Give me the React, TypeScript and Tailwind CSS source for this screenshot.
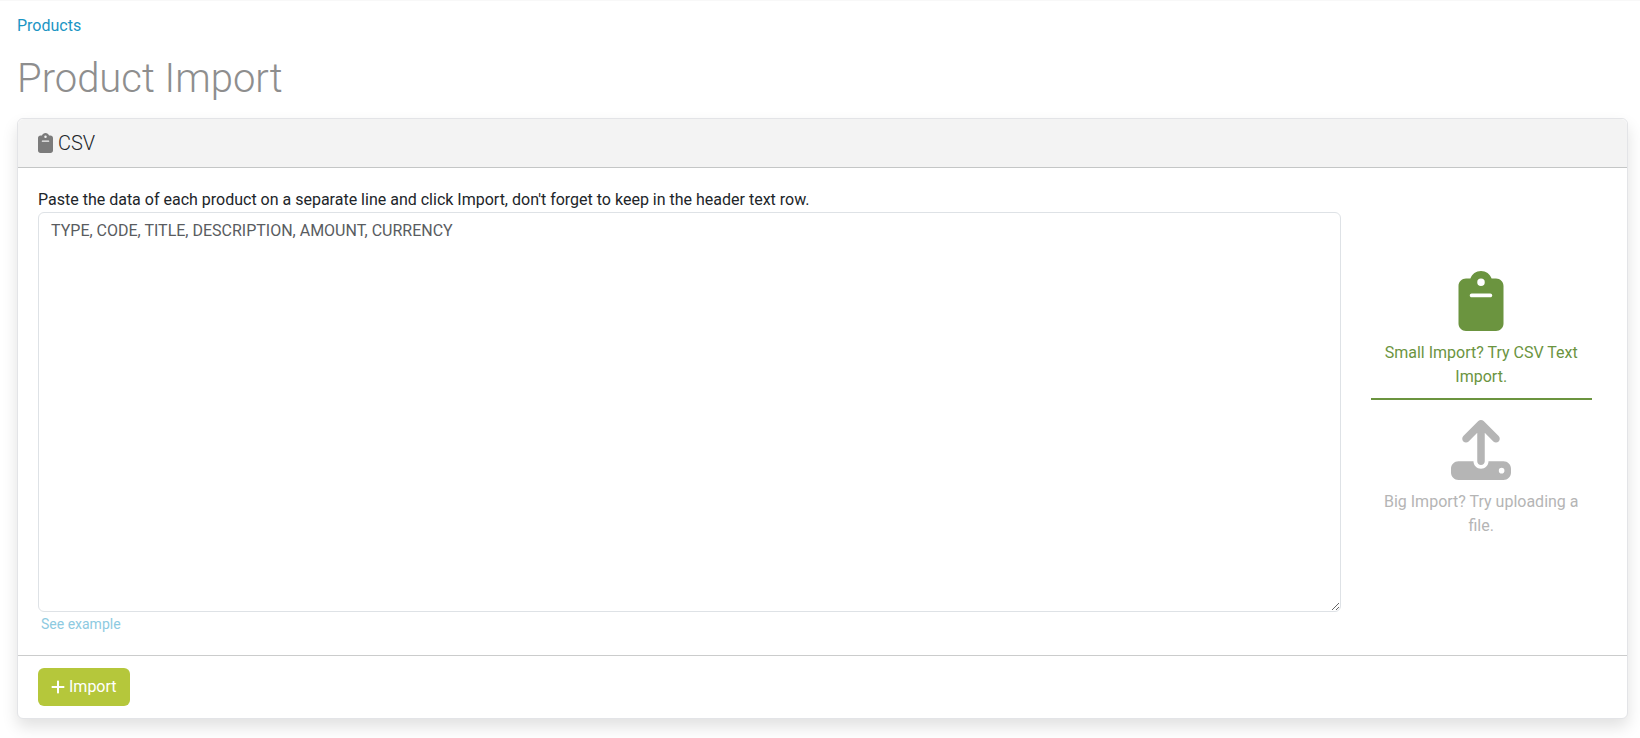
import { useState } from "react";
import { FaClipboard, FaPlus, FaUpload } from "react-icons/fa6";

const CSV_HEADER = "TYPE, CODE, TITLE, DESCRIPTION, AMOUNT, CURRENCY";

export default function App() {
  const [mode, setMode] = useState("text");
  const [csv, setCsv] = useState(CSV_HEADER);

  const tabs = [
    { id: "text", Icon: FaClipboard, label: "Small Import? Try CSV Text Import." },
    { id: "file", Icon: FaUpload, label: "Big Import? Try uploading a file." },
  ];

  return (
    <div className="border-t border-[#f8f8f8] pl-[17px] pr-3 pt-[13px] pb-5 font-[Roboto,sans-serif] text-base text-[#212529]">
      {/* Breadcrumb */}
      <nav>
        <a href="#products" className="text-[#1b95c4]">
          Products
        </a>
      </nav>
      <h1 className="mt-[17px] text-[40px] leading-[48px] font-light text-[#8e8e8e]">
        Product Import
      </h1>

      <div className="mt-[15px] rounded-md border border-[#e3e4e7] bg-white shadow-[0_8px_16px_rgba(0,0,0,0.12)]">
        {/* Header */}
        <div className="flex items-center gap-[5px] rounded-t-md border-b border-[#c4c6c6] bg-[#f3f3f3] px-5 py-3">
          <FaClipboard className="h-5 w-[15px] text-[#7b7b7b]" />
          <h2 className="text-xl leading-6 font-light">CSV</h2>
        </div>

        {/* Body */}
        <div className="p-5">
          <div className="-mx-3 flex items-center">
            <div className="w-5/6 pr-[13px] pl-3">
              <label htmlFor="csv" className="block">
                Paste the data of each product on a separate line and click
                Import, don't forget to keep in the header text row.
              </label>
              <textarea
                id="csv"
                spellCheck={false}
                value={csv}
                onChange={(e) => setCsv(e.target.value)}
                className="block h-[400px] w-full resize rounded-md border border-[#dee2e6] px-3 py-1.5 text-[#595c5f]"
              />
              <a
                href="#example"
                className="ml-[3px] block w-fit pt-0.5 text-sm leading-[21px] text-[#8dcae1]"
              >
                See example
              </a>
            </div>

            {/* Import mode */}
            <div className="w-1/6 pr-[27px] pb-6 pl-[17px]">
              {tabs.map(({ id, Icon, label }) => (
                <button
                  key={id}
                  type="button"
                  onClick={() => setMode(id)}
                  className={`flex w-full flex-col items-center gap-2.5 border-b-2 px-2 pt-5 pb-[9px] ${
                    mode === id
                      ? "border-[#6b943f] text-[#6b943f]"
                      : "border-transparent text-[#b5b5b5]"
                  }`}
                >
                  <Icon className="size-[60px]" />
                  <span>{label}</span>
                </button>
              ))}
            </div>
          </div>
        </div>

        {/* Footer */}
        <div className="border-t border-[#cbcccc] px-5 py-3">
          <button
            type="button"
            className="flex items-center gap-1 rounded-md bg-[#b5c73b] px-[13px] py-[7px] text-white"
          >
            <FaPlus className="h-4 w-3.5" />
            Import
          </button>
        </div>
      </div>
    </div>
  );
}
